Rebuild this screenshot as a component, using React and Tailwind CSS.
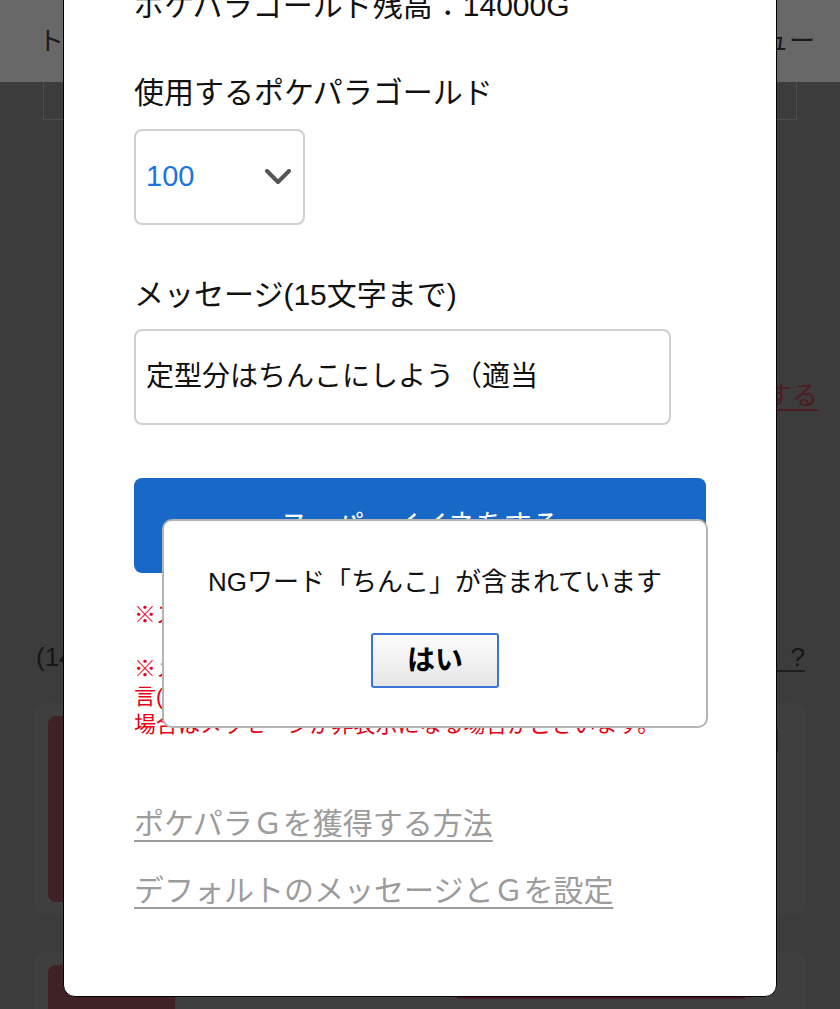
import React from "react"

const font = { fontFamily: '"Liberation Sans", "Noto Sans CJK JP", sans-serif' }

function BackgroundPage() {
  return (
    <div className="flex flex-col">
      <div className="h-[82px] bg-[#686868] flex items-center justify-between pl-[38px] pr-[25px] text-[26px] text-[#1a1a1a]">
        <span>トップ</span>
        <span>メニュー</span>
      </div>
      <div className="mx-[43px] h-[38px] border border-t-0 border-[#4e4e4e]" />
      <div className="mt-[261px] flex justify-end pr-[22px] h-[30px] leading-[30px] text-[26px]">
        <span className="text-[#4e1c20] underline underline-offset-4">登録する</span>
      </div>
      <div className="mt-[231px] flex justify-between pl-[36px] pr-[35px] h-[30px] leading-[30px] text-[26px] text-[#161616]">
        <span>(14</span>
        <span className="underline underline-offset-4 decoration-[#1e1e1e]">とは{"\u00a0\u00a0"}?</span>
      </div>
      <div className="mt-[31px] mx-[35px] h-[212px] rounded-[10px] bg-[#3f3f3f] p-[13px] flex">
        <div className="w-[127px] h-full rounded-[8px] bg-[#3e2225]" />
        <div className="ml-auto mt-[14px] mr-[14px] w-[6px] h-[22px] bg-[#4a2226]" />
      </div>
      <div className="mt-[37px] mx-[35px] h-[120px] rounded-[10px] bg-[#3f3f3f] p-[13px] flex">
        <div className="w-[127px] h-full rounded-[8px] bg-[#3e2225]" />
        <div className="ml-[282px] mt-[31px] w-[288px] h-[3px] flex items-center">
          <div className="flex-1 h-[2px] bg-[#4a1d2a]" />
        </div>
      </div>
    </div>
  )
}

function Chevron() {
  return (
    <svg width="26" height="16" viewBox="0 0 26 16">
      <polyline points="2,2 13,13 24,2" fill="none" stroke="#555" strokeWidth="4" strokeLinecap="round" strokeLinejoin="round" />
    </svg>
  )
}

function GoldModal() {
  return (
    <div className="absolute left-[63px] top-[-40px] w-[714px] h-[1037px] bg-white border border-black rounded-b-[12px] overflow-hidden">
      <div className="pl-[70px] pr-[69px] pt-[25px] text-[#111]">
        <div className="h-[40px] leading-[40px] text-[30px]">ポケパラゴールド残高：14000G</div>

        <div className="mt-[47px] h-[40px] leading-[40px] text-[30px]">使用するポケパラゴールド</div>
        <div className="mt-[16px] w-[171px] h-[96px] rounded-[8px] border-2 border-[#cfcfcf] flex items-center justify-between pl-[10px] pr-[12px]">
          <span className="text-[29px] text-[#1a73e0]">100</span>
          <Chevron />
        </div>

        <div className="mt-[50px] h-[40px] leading-[40px] text-[30px]">メッセージ(15文字まで)</div>
        <div className="mt-[14px] w-[537px] h-[96px] rounded-[8px] border-2 border-[#cfcfcf] flex items-center pl-[10px]">
          <span className="text-[28px] text-[#111]">定型分はちんこにしよう（適当</span>
        </div>

        <div className="mt-[53px] w-[572px] h-[95px] rounded-[8px] bg-[#1868c8] flex items-center justify-center text-white text-[28px]">
          スーパーイイネをする
        </div>

        <div className="mt-[28px] text-[22px] leading-[28px] text-[#e60012]">
          <p>※スーパーイイネは取り消しできません。</p>
          <p className="mt-[26px]">
            ※メッセージに個人情報や誹謗中傷などの不適切な発
            <br />
            言(NGワード含む)が含まれていると判断された
            <br />
            場合はメッセージが非表示になる場合がございます。
          </p>
        </div>

        <div className="mt-[65px] h-[40px] leading-[40px] text-[30px] text-[#9c9c9c]">
          <span className="underline underline-offset-[6px] decoration-2">ポケパラＧを獲得する方法</span>
        </div>
        <div className="mt-[27px] h-[40px] leading-[40px] text-[30px] text-[#9c9c9c]">
          <span className="underline underline-offset-[6px] decoration-2">デフォルトのメッセージとＧを設定</span>
        </div>
      </div>
    </div>
  )
}

function NgAlert() {
  return (
    <div className="absolute left-[162px] top-[519px] w-[546px] h-[209px] bg-white border-2 border-[#b4b4b4] rounded-[10px] flex flex-col items-center">
      <div className="mt-[44px] h-[34px] leading-[34px] text-[26px] text-[#111]">NGワード「ちんこ」が含まれています</div>
      <button className="mt-[34px] w-[128px] h-[55px] rounded-[3px] border-2 border-[#3a74d6] bg-gradient-to-b from-[#fdfdfd] to-[#e6e6e6] text-[28px] font-bold text-black">
        はい
      </button>
    </div>
  )
}

export default function App() {
  return (
    <div className="relative w-[840px] h-[1009px] overflow-hidden bg-[#3c3c3c]" style={font}>
      <BackgroundPage />
      <GoldModal />
      <NgAlert />
    </div>
  )
}
